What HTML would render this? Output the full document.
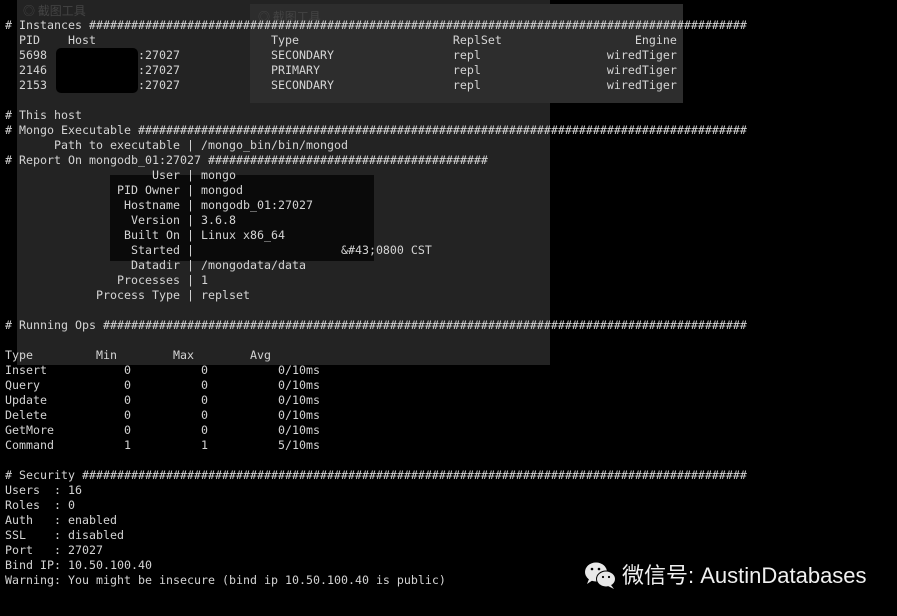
<!DOCTYPE html>
<html><head><meta charset="utf-8"><style>
html,body{margin:0;padding:0;background:#000;width:897px;height:616px;overflow:hidden;position:relative}
.p{position:absolute}
pre{position:absolute;left:5px;top:18px;margin:0;font-family:"DejaVu Sans Mono","Liberation Mono",monospace;font-size:11.63px;line-height:15px;color:#d4d4d4;white-space:pre}
.wm{position:absolute;font-family:"Liberation Sans","Noto Sans CJK SC",sans-serif;font-size:22px;color:#f0f0f0;line-height:30px}
</style></head><body>
<div class="p" style="left:17px;top:0;width:533px;height:365px;background:#232323"></div>
<div class="p" style="left:250px;top:4px;width:433px;height:99px;background:#2d2d2d"></div>
<div class="p" style="left:110px;top:175px;width:264px;height:86px;background:#0a0a0a"></div>
<div class="p" style="left:23px;top:2px;font:12px 'Noto Sans CJK SC',sans-serif;color:#444">◎ 截图工具</div>
<div class="p" style="left:258px;top:8px;font:12px 'Noto Sans CJK SC',sans-serif;color:#444">◎ 截图工具</div>
<pre># Instances ##############################################################################################
  PID    Host                         Type                      ReplSet                   Engine
  5698             :27027             SECONDARY                 repl                  wiredTiger
  2146             :27027             PRIMARY                   repl                  wiredTiger
  2153             :27027             SECONDARY                 repl                  wiredTiger

# This host
# Mongo Executable #######################################################################################
       Path to executable | /mongo_bin/bin/mongod
# Report On mongodb_01:27027 ########################################
                     User | mongo
                PID Owner | mongod
                 Hostname | mongodb_01:27027
                  Version | 3.6.8
                 Built On | Linux x86_64
                  Started |                     &amp;#43;0800 CST
                  Datadir | /mongodata/data
                Processes | 1
             Process Type | replset

# Running Ops ############################################################################################

Type         Min        Max        Avg
Insert           0          0          0/10ms
Query            0          0          0/10ms
Update           0          0          0/10ms
Delete           0          0          0/10ms
GetMore          0          0          0/10ms
Command          1          1          5/10ms

# Security ###############################################################################################
Users  : 16
Roles  : 0
Auth   : enabled
SSL    : disabled
Port   : 27027
Bind IP: 10.50.100.40
Warning: You might be insecure (bind ip 10.50.100.40 is public)</pre>
<div class="p" style="left:56px;top:48px;width:82px;height:45px;background:#000;border-radius:5px"></div>
<svg class="p" style="left:583px;top:560px" width="36" height="32" viewBox="0 0 36 32">
<ellipse cx="13" cy="12" rx="11" ry="9.5" fill="#e8e8e8"/>
<path d="M6 19 L4 24 L10 20Z" fill="#e8e8e8"/>
<ellipse cx="23" cy="19" rx="10" ry="8.5" fill="#000"/>
<ellipse cx="23" cy="19" rx="9" ry="7.5" fill="#e8e8e8"/>
<path d="M28 25 L31 29 L25 26Z" fill="#e8e8e8"/>
<circle cx="9" cy="9" r="1.3" fill="#000"/><circle cx="16" cy="9" r="1.3" fill="#000"/>
<circle cx="20" cy="17" r="1.1" fill="#000"/><circle cx="26" cy="17" r="1.1" fill="#000"/>
</svg>
<div class="wm" style="left:622px;top:561px">微信号: AustinDatabases</div>
</body></html>
